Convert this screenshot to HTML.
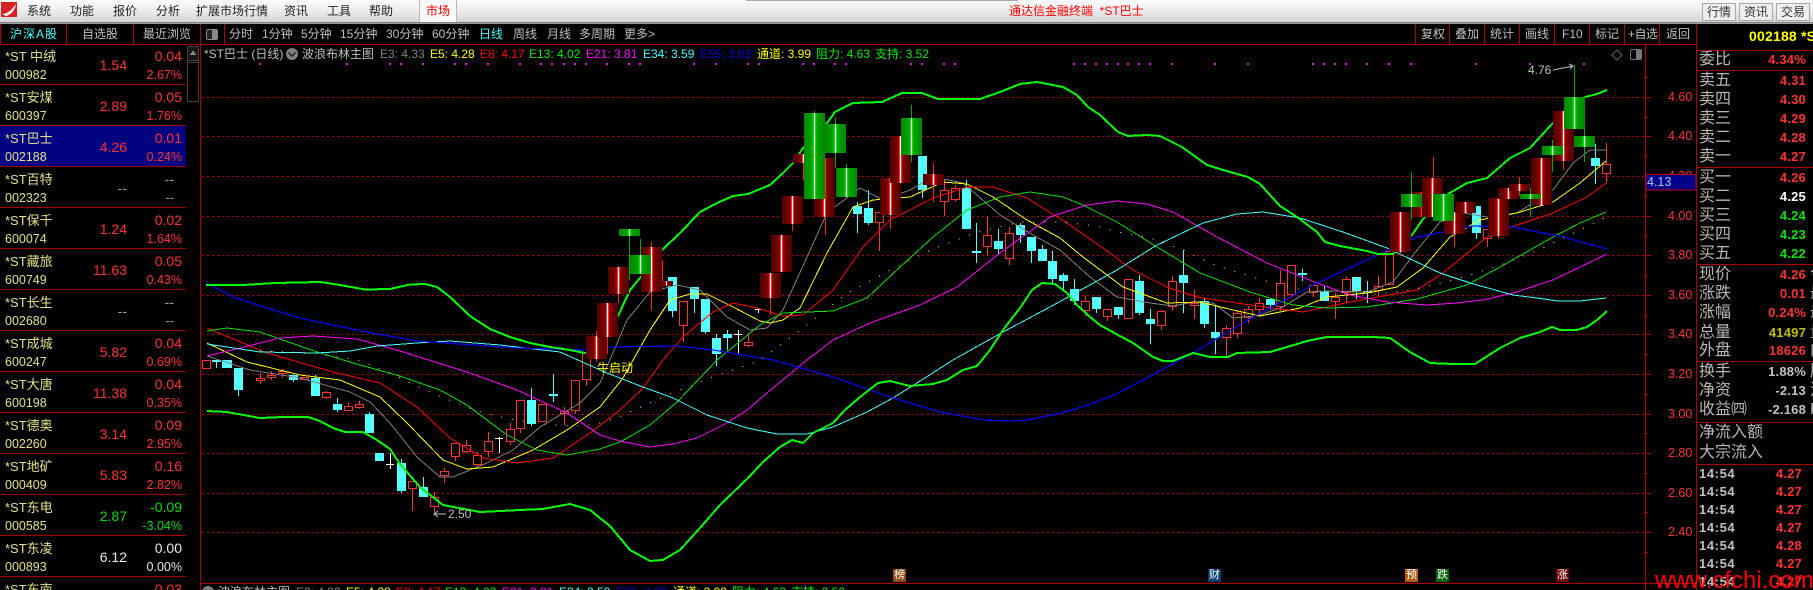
<!DOCTYPE html>
<html><head><meta charset="utf-8"><style>
html,body{margin:0;padding:0;background:#000;width:1813px;height:590px;overflow:hidden}
body{position:relative;font-family:"Liberation Sans","Noto Sans CJK SC",sans-serif;color:#c0c0c0}
.t{position:absolute;white-space:nowrap;line-height:16px;font-size:12px}
.top{position:absolute;left:0;top:0;width:1813px;height:22px;background:linear-gradient(#fbfbfb,#f0f0f0 40%,#d4d4d4)}
.sh{position:absolute;left:0;top:22px;width:1813px;height:2px;background:linear-gradient(#707070,#b0b0b0)}
.m{color:#222;top:3px}
.btn{position:absolute;top:3px;width:32px;height:16px;border:1px solid #a8a8a8;background:#eee;color:#333;font-size:12px;line-height:16px;text-align:center}
.r{position:absolute;left:0;width:186px;height:40px;border-bottom:1px solid #a80000;color:#ff3232}
.r span{position:absolute;white-space:nowrap;line-height:16px}
.n{left:5px;top:5px;font-size:13px;color:#e2e28a}
.c{left:5px;top:22.5px;font-size:12.5px;color:#e2e28a}
.p{right:59px;top:13px;font-size:14px}
.d{right:4px;top:4px;font-size:14px}
.q{right:4px;top:23px;font-size:12.5px}
.g{color:#00dd00}.w{color:#e8e8e8}.x{color:#a0a0a0}
.l{left:1699px;font-size:16px;color:#b8b8b8;line-height:18px}
.v{right:7px;font-size:13px;font-weight:bold;color:#ff3232;letter-spacing:.2px}
.lab{left:1668px;font-size:12.5px;color:#ff3232}
.tm{left:1699px;font-size:13px;font-weight:bold;letter-spacing:.6px;color:#c0c0c0}
.tp{right:11px;font-size:13px;font-weight:bold;color:#ff3232;letter-spacing:.2px}
.e{position:absolute;top:569px;width:13px;height:13px;color:#fff;font-size:11px;line-height:13px;text-align:center;overflow:hidden}
</style></head><body>

<span class="t lab" style="top:168px">4.20</span>

<svg width="1813" height="590" style="position:absolute;left:0;top:0" xmlns="http://www.w3.org/2000/svg">
<defs>
<linearGradient id="br"><stop offset="0" stop-color="#500000"/><stop offset=".3" stop-color="#700000"/><stop offset=".42" stop-color="#a00000"/><stop offset=".46" stop-color="#ff0000"/><stop offset=".47" stop-color="#fff"/><stop offset=".53" stop-color="#fff"/><stop offset=".54" stop-color="#ff0000"/><stop offset=".58" stop-color="#a00000"/><stop offset=".7" stop-color="#700000"/><stop offset="1" stop-color="#500000"/></linearGradient>
<linearGradient id="bg"><stop offset="0" stop-color="#008800"/><stop offset=".35" stop-color="#00a000"/><stop offset=".45" stop-color="#00c800"/><stop offset=".47" stop-color="#40ff40"/><stop offset=".48" stop-color="#fff"/><stop offset=".52" stop-color="#fff"/><stop offset=".53" stop-color="#40ff40"/><stop offset=".55" stop-color="#00c800"/><stop offset=".65" stop-color="#00a000"/><stop offset="1" stop-color="#008800"/></linearGradient>
</defs>
<!-- grid -->
<path shape-rendering="crispEdges" stroke="#b00000" stroke-width="1" stroke-dasharray="2 3" fill="none" d="M202 97.5H1645M202 136.5H1645M202 176.5H1645M202 216.5H1645M202 255.5H1645M202 295.5H1645M202 334.5H1645M202 374.5H1645M202 414.5H1645M202 453.5H1645M202 493.5H1645M202 532.5H1645"/>
<!-- frame lines -->
<path shape-rendering="crispEdges" stroke="#b00000" stroke-width="1" fill="none" d="M200.5 24V590M0 44.5H1696M66.5 24V44M133.5 24V44M0.5 24V44M224.5 24V44M1415.5 24V44M1449.5 24V44M1484.5 24V44M1519.5 24V44M1554.5 24V44M1589.5 24V44M1624.5 24V44M1659.5 24V44M1696.5 24V590M1645.5 44V590M200 583.5H1696M1696 50.5H1813M1696 70.5H1813M1696 167.5H1813M1696 264.5H1813M1696 361.5H1813M1696 422.5H1813M1696 464.5H1813
M1645 97.5h6M1645 136.5h6M1645 176.5h6M1645 216.5h6M1645 255.5h6M1645 295.5h6M1645 334.5h6M1645 374.5h6M1645 414.5h6M1645 453.5h6M1645 493.5h6M1645 532.5h6M1645 77.5h3M1645 117.5h3M1645 156.5h3M1645 196.5h3M1645 236.5h3M1645 275.5h3M1645 315.5h3M1645 354.5h3M1645 394.5h3M1645 433.5h3M1645 473.5h3M1645 512.5h3M1645 552.5h3"/>
<!-- magenta dots -->
<path shape-rendering="crispEdges" stroke="#ff00ff" stroke-width="2" fill="none" d="M259 64h2M346 64h2M389 64h2M400 64h2M422 64h2M454 64h2M465 64h2M487 64h2M519 64h2M540 64h2M551 64h2M563 64h2M574 64h2M585 64h2M606 64h2M628 64h2M639 64h2M693 64h2M715 64h2M747 64h2M758 64h2M802 64h2M813 64h2M834 64h2M845 64h2M910 64h2M921 64h2M943 64h2M954 64h2M1073 64h2M1084 64h2M1095 64h2M1106 64h2M1117 64h2M1127 64h2M1138 64h2M1149 64h2M1171 64h2M1214 64h2M1247 64h2M1312 64h2M1323 64h2M1334 64h2M1345 64h2M1366 64h2M1388 64h2M1410 64h2M1475 64h2M1529 64h2M1583 64h2"/>
<!-- small candles: hollow red -->
<path shape-rendering="crispEdges" stroke="#ff3232" stroke-width="1" fill="none" d="M202.5 360.5h8v8h-8z
M256.5 378.5h8v2h-8zM260.5 373V378M260.5 381V384
M267.5 375.5h8v2h-8zM271.5 371V375M271.5 378V380
M278.5 371.5h8v2h-8zM282.5 369V371M282.5 374V378
M300.5 377.5h8v2h-8z
M322.5 392.5h8v5h-8zM326.5 391V392M326.5 398V399
M344.5 406.5h8v4h-8zM348.5 403V406
M355.5 404.5h8v3h-8zM359.5 401V404M359.5 408V409
M408.5 481.5h8v7h-8zM412.5 489V511
M430.5 497.5h8v9h-8zM434.5 492V497M434.5 507V513
M440.5 471.5h8v4h-8zM444.5 468V471M444.5 476V483
M451.5 443.5h8v13h-8zM455.5 457V461
M462.5 445.5h8v6h-8zM466.5 440V445M466.5 452V453
M473.5 455.5h8v9h-8zM477.5 452V455M477.5 465V466
M484.5 441.5h8v10h-8zM488.5 432V441M488.5 452V457
M506.5 429.5h8v12h-8zM510.5 423V429M510.5 442V445
M516.5 400.5h8v28h-8zM520.5 429V433
M538.5 404.5h8v17h-8z
M560.5 411.5h8v2h-8zM564.5 407V411M564.5 414V425
M571.5 380.5h8v30h-8zM575.5 411V414
M582.5 353.5h8v26h-8zM586.5 380V386
M679.5 301.5h8v24h-8zM683.5 326V342
M744.5 342.5h8v3h-8zM748.5 333V342M748.5 346V347
M875.5 212.5h8v10h-8zM879.5 223V251
M940.5 190.5h8v11h-8zM944.5 179V190M944.5 202V216
M951.5 188.5h8v11h-8zM955.5 185V188M955.5 200V202
M983.5 235.5h8v11h-8zM987.5 217V235M987.5 247V255
M1005.5 233.5h8v25h-8zM1009.5 227V233M1009.5 259V265
M1081.5 301.5h8v9h-8zM1085.5 296V301M1085.5 311V316
M1103.5 309.5h8v7h-8zM1107.5 317V321
M1124.5 279.5h8v39h-8z
M1157.5 311.5h8v14h-8zM1161.5 310V311M1161.5 326V330
M1168.5 281.5h8v25h-8zM1172.5 276V281M1172.5 307V311
M1190.5 303.5h8v2h-8zM1194.5 290V303M1194.5 306V319
M1222.5 328.5h8v9h-8zM1226.5 325V328M1226.5 338V356
M1233.5 313.5h8v20h-8zM1237.5 310V313M1237.5 334V338
M1244.5 309.5h8v8h-8zM1248.5 306V309M1248.5 318V323
M1255.5 303.5h8v6h-8zM1259.5 298V303M1259.5 310V317
M1276.5 283.5h8v23h-8zM1280.5 270V283M1280.5 307V311
M1287.5 265.5h8v29h-8zM1291.5 295V298
M1309.5 285.5h8v7h-8zM1313.5 293V297
M1331.5 297.5h8v4h-8zM1335.5 293V297M1335.5 302V319
M1342.5 279.5h8v13h-8zM1346.5 276V279M1346.5 293V302
M1374.5 286.5h8v4h-8zM1378.5 276V286M1378.5 291V296
M1385.5 251.5h8v33h-8z
M1483.5 229.5h8v9h-8zM1487.5 239V247
M1602.5 164.5h8v9h-8zM1606.5 143V164M1606.5 174V183"/>
<!-- small candles: cyan wicks -->
<path shape-rendering="crispEdges" stroke="#55ffff" stroke-width="1" fill="none" d="M216.5 362V368M238.5 390V396M293.5 380V382M315.5 375V378M337.5 398V412M369.5 412V414M401.5 459V493M423.5 477V487M531.5 388V426M553.5 374V402M672.5 311V317M694.5 299V313M705.5 332V334M716.5 334V366M727.5 330V350M857.5 202V233M868.5 190V225M922.5 190V198M966.5 180V188M976.5 223V263M998.5 229V254M1020.5 223V243M1031.5 251V263M1042.5 245V249M1052.5 251V283M1063.5 273V290M1074.5 279V305M1096.5 309V313M1118.5 315V319M1139.5 275V315M1150.5 309V344M1183.5 250V313M1204.5 298V328M1215.5 305V354M1270.5 305V309M1302.5 269V281M1324.5 286V291M1356.5 291V299M1367.5 281V303M1476.5 233V239M1595.5 144V184"/>
<path shape-rendering="crispEdges" fill="#55ffff" d="M212 360h9v2h-9zM222 360h10v8h-10zM234 368h9v22h-9zM289 375h9v5h-9zM311 378h9v18h-9zM333 404h9v6h-9zM365 414h9v19h-9zM375 453h9v8h-9zM397 463h9v28h-9zM419 487h9v10h-9zM527 400h9v24h-9zM549 394h9v2h-9zM668 277h9v34h-9zM690 287h9v12h-9zM701 299h9v33h-9zM712 338h9v16h-9zM723 334h9v4h-9zM853 206h9v8h-9zM864 208h9v15h-9zM918 156h9v34h-9zM962 188h9v41h-9zM972 251h9v2h-9zM994 241h9v8h-9zM1016 225h9v10h-9zM1027 237h9v14h-9zM1038 249h9v12h-9zM1048 261h9v18h-9zM1059 275h9v6h-9zM1070 289h9v12h-9zM1092 297h9v12h-9zM1114 307h9v8h-9zM1135 281h9v32h-9zM1146 319h9v5h-9zM1179 275h9v8h-9zM1200 301h9v23h-9zM1211 332h9v6h-9zM1266 299h9v6h-9zM1298 273h9v2h-9zM1320 291h9v10h-9zM1352 277h9v14h-9zM1363 291h9v2h-9zM1472 206h9v27h-9zM1591 158h9v8h-9z"/>
<!-- white crosses -->
<path shape-rendering="crispEdges" stroke="#fff" stroke-width="1" fill="none" d="M390.5 453V469M386 464.5H394M499.5 437V453M495 438.5H503M738.5 330V353M734 334.5H742M758.5 309V313M755 309.5H761"/>
<!-- lines -->
<g fill="none" shape-rendering="crispEdges" stroke-width="1">
<polyline stroke="#808080" points="207,356 250,370 300,378 350,392 370,402 390,423 417,457 440,477 453,477 487,463 513,450 540,427 580,403 600,383 627,320 650,292 677,285 700,290 727,317 750,330 767,328 783,310 807,257 827,213 860,188 883,200 910,190 933,177 963,183 1000,215 1033,235 1060,250 1090,277 1117,297 1150,303 1173,306 1193,302 1213,303 1233,318 1257,316 1283,307 1307,292 1330,291 1367,292 1393,282 1417,250 1440,222 1463,213 1487,217 1517,213 1553,190 1573,163 1590,150 1606,150"/>
<polyline stroke="#ffff00" points="207,343 247,362 300,375 340,380 380,397 407,423 443,460 467,469 493,467 533,450 567,430 600,407 623,378 650,330 670,300 690,294 707,294 733,307 760,321 770,323 783,320 800,308 827,253 853,207 873,200 910,197 943,182 967,184 993,197 1027,220 1060,238 1083,257 1123,287 1167,303 1200,302 1233,310 1260,316 1300,308 1327,297 1367,293 1397,287 1423,268 1450,237 1480,220 1517,213 1553,202 1580,183 1606,161"/>
<polyline stroke="#ff0000" points="207,328 267,353 333,372 380,383 417,407 450,438 483,458 517,463 553,458 590,433 620,410 643,388 663,360 683,337 713,312 733,303 757,308 783,316 803,315 833,290 863,247 890,220 933,198 967,187 993,187 1027,198 1067,223 1103,248 1133,270 1167,287 1197,297 1250,305 1303,312 1350,302 1383,296 1417,290 1443,273 1487,237 1517,225 1553,213 1587,197 1606,183"/>
<polyline stroke="#00e000" points="207,331 227,328 260,332 317,352 360,365 400,376 440,390 467,405 507,435 537,450 567,455 600,449 620,442 650,425 677,402 699,379 717,360 760,325 783,313 833,311 867,298 900,267 933,237 967,210 1000,197 1030,192 1063,197 1083,205 1117,222 1157,247 1200,273 1250,292 1293,305 1327,308 1367,307 1417,299 1467,285 1500,267 1553,237 1580,223 1606,212"/>
<polyline stroke="#ff00ff" points="207,356 240,348 280,338 313,336 357,339 400,351 467,372 517,390 567,413 600,435 620,441 650,447 673,444 697,438 727,423 747,410 773,388 807,360 833,340 870,323 920,305 957,287 1000,253 1050,217 1087,205 1117,201 1147,204 1173,212 1217,237 1267,263 1317,283 1350,295 1387,302 1427,305 1457,303 1483,300 1513,293 1553,280 1607,254"/>
<polyline stroke="#40ffff" points="207,344 260,352 317,353 350,351 377,346 417,343 450,341 500,345 560,352 607,373 643,387 673,398 707,415 747,428 777,434 807,434 833,427 867,412 893,398 917,383 953,360 1003,332 1050,307 1117,270 1157,245 1203,223 1237,214 1263,212 1300,218 1343,232 1387,248 1440,273 1470,283 1513,295 1537,298 1558,301 1580,301 1606,298"/>
<polyline stroke="#0000ff" stroke-width="1.2" points="207,283 233,297 267,308 300,318 333,325 377,334 417,341 517,348 587,350 608,347 677,346 713,350 773,360 833,377 893,398 940,412 983,420 1010,421 1027,420 1062,413 1085,406 1112,396 1143,380 1193,353 1253,317 1317,283 1388,250 1417,237 1443,232 1473,226 1513,227 1563,237 1607,249"/>
<polyline stroke="#00ff00" stroke-width="2" points="206,285 243,285 275,283 320,282 340,285 365,289.5 390,289 410,284.5 425,284 437,287 450,297 470,316 490,329 510,337 530,343 550,347 570,350 585,353 600,351 618,316 630,290 640,278 662,250 680,233 700,212 717,203 733,196 748,194 770,185 783,173 793,163 803,148 827,123 835,112 853,103 882,102 902,93 922,93 938,99 980,99 1000,92 1020,84 1037,82 1063,87 1077,95 1088,107 1100,115 1118,132 1128,136 1147,135 1160,136 1182,147 1207,165 1223,170 1248,177 1260,184 1280,206 1297,217 1317,232 1325,242 1340,246 1367,251 1378,254 1393,254 1412,235 1423,219 1448,194 1467,183 1487,178 1510,158 1530,148 1552,124 1585,97 1597,94 1607,90"/>
<polyline stroke="#00ff00" stroke-width="2" points="207,411 227,412 260,418 283,417 308,417 320,421 333,428 345,432 363,432 377,440 390,449 400,464 420,487 443,505 480,512 520,510 543,509 570,504 590,510 610,526 630,550 650,561 663,560 680,550 700,528 720,505 747,479 763,462 780,447 792,440 803,443 813,433 833,423 845,410 860,397 878,383 890,381 910,386 933,384 947,380 963,370 977,366 990,350 1003,330 1020,308 1032,290 1042,283 1055,284 1067,293 1077,305 1090,317 1100,325 1118,335 1133,343 1153,357 1163,361 1173,361 1193,353 1210,357 1228,357 1237,353 1270,352 1287,347 1307,341 1327,337 1373,337 1390,338 1410,352 1430,363 1453,364 1475,364 1500,348 1520,338 1540,332 1552,327 1560,330 1577,330 1587,327 1597,320 1607,311"/>
</g>
<!-- yellow channel dots -->
<polyline fill="none" stroke="#ffff00" stroke-width="1" stroke-dasharray="1 10" points="260,351 314,353 358,360 390,373 434,394 477,411 510,419 542,424 575,426 597,424 619,417 652,402 672,393 693,385 715,376 759,361 803,328 846,294 890,270 933,249 977,232 1021,222 1063,222 1096,226 1118,232 1150,238 1183,250 1215,265 1259,279 1302,290 1346,292 1378,294 1411,290 1454,280 1498,266 1541,249 1606,217"/>
<!-- big candles -->
<path shape-rendering="crispEdges" stroke="#ff2020" stroke-width="1" fill="none" d="M596.5 331V362M607.5 337V354M618.5 294V303M651.5 242V311M662.5 260V287M770.5 298V315M792.5 224V231M803.5 163V180M825.5 217V235M890.5 215V229M933.5 163V202M1400.5 252V256M1433.5 157V178M1454.5 234V247M1498.5 236V239M1519.5 177V196M1563.5 161V170"/>
<g fill="url(#br)" shape-rendering="crispEdges">
<rect x="586" y="336" width="21" height="23"/><rect x="597" y="303" width="21" height="34"/><rect x="608" y="267" width="21" height="27"/><rect x="641" y="247" width="21" height="45"/><rect x="660" y="281" width="13" height="5"/>
<rect x="760" y="273" width="21" height="25"/><rect x="771" y="235" width="21" height="37"/><rect x="782" y="196" width="21" height="28"/><rect x="793" y="154" width="21" height="9"/><rect x="814" y="158" width="21" height="59"/>
<rect x="880" y="178" width="21" height="37"/><rect x="890" y="136" width="21" height="47"/><rect x="923" y="174" width="21" height="11"/>
<rect x="1390" y="212" width="21" height="40"/><rect x="1412" y="192" width="21" height="25"/><rect x="1422" y="178" width="21" height="39"/><rect x="1444" y="212" width="21" height="22"/><rect x="1455" y="202" width="21" height="11"/><rect x="1488" y="198" width="21" height="38"/><rect x="1498" y="188" width="21" height="11"/><rect x="1509" y="184" width="21" height="7"/><rect x="1531" y="158" width="21" height="47"/><rect x="1553" y="111" width="21" height="50"/>
</g>
<path shape-rendering="crispEdges" stroke="#00a800" stroke-width="1" fill="none" d="M629.5 236V280M640.5 239V255M814.5 111V113M835.5 117V168M846.5 164V168M911.5 105V162M1411.5 172V220M1530.5 188V217M1552.5 140V172M1574.5 65V97M1584.5 129V162"/>
<g fill="url(#bg)" shape-rendering="crispEdges">
<rect x="619" y="229" width="21" height="7"/><rect x="630" y="255" width="21" height="19"/><rect x="804" y="113" width="21" height="86"/><rect x="825" y="124" width="21" height="29"/><rect x="836" y="168" width="21" height="29"/><rect x="901" y="118" width="21" height="37"/><rect x="1401" y="194" width="21" height="13"/><rect x="1433" y="194" width="21" height="27"/><rect x="1520" y="194" width="21" height="5"/><rect x="1542" y="146" width="21" height="9"/><rect x="1564" y="97" width="21" height="32"/><rect x="1574" y="136" width="21" height="11"/>
</g>
<!-- arrows -->
<path fill="none" stroke="#c0c0c0" stroke-width="1" d="M1553 70L1573 66M1569 64L1573 66L1570 69M434 514H446M438 511L434 514L438 517"/>
<!-- blue price box -->
<rect x="1646" y="174.5" width="50" height="15.5" fill="#000088" stroke="#c00000" stroke-width="1" shape-rendering="crispEdges"/>
<!-- legend circles -->
<circle cx="292" cy="54" r="6" fill="#808080"/><path d="M288.5 52.5L292 56L295.5 52.5" fill="none" stroke="#222" stroke-width="1.5"/>
<circle cx="208" cy="592" r="6" fill="#808080"/>
<!-- chart icons -->
<path d="M1617 50L1622 55L1617 60L1612 55Z" fill="none" stroke="#666" stroke-width="1"/>
<rect x="1630.5" y="49.5" width="11" height="10" rx="1.5" fill="none" stroke="#777"/><rect x="1636" y="50" width="5" height="9" fill="#777"/>
<rect x="206.5" y="29.5" width="11" height="10" rx="1.5" fill="#222" stroke="#888"/><rect x="212" y="30" width="5" height="9" fill="#888"/>
<!-- scrollbar -->
<rect x="187.5" y="46.5" width="11" height="14" fill="#161616" stroke="#444" shape-rendering="crispEdges"/><path d="M193 50.5L196.5 55H189.5Z" fill="#888"/>
<rect x="187.5" y="62.5" width="11" height="39" fill="#000" stroke="#444" shape-rendering="crispEdges"/>
</svg>

<!-- top bar -->
<div class="top"></div><div class="sh"></div>
<div style="position:absolute;left:746px;top:0;width:272px;height:1px;background:#a8a8a8"></div>
<svg width="18" height="18" style="position:absolute;left:0;top:1px"><rect x="1" y="1" width="16" height="15" fill="#d82020"/><path d="M2 13C7 13 11 10 16 3C15 9 11 14 6 15Z" fill="#fff"/></svg>
<div style="position:absolute;left:419px;top:0;width:38px;height:22px;background:#f8f8f8;border-left:1px solid #bbb;border-right:1px solid #bbb;box-sizing:border-box"></div>
<span class="t m" style="left:27px">系统</span><span class="t m" style="left:70px">功能</span><span class="t m" style="left:113px">报价</span><span class="t m" style="left:156px">分析</span><span class="t m" style="left:196px">扩展市场行情</span><span class="t m" style="left:284px">资讯</span><span class="t m" style="left:327px">工具</span><span class="t m" style="left:369px">帮助</span><span class="t m" style="left:426px;color:#f00">市场</span>
<span class="t" style="left:1009px;top:3px;color:#f00">通达信金融终端 &nbsp;*ST巴士</span>
<div class="btn" style="left:1702px">行情</div><div class="btn" style="left:1739px">资讯</div><div class="btn" style="left:1776px">交易</div>

<!-- toolbar -->
<span class="t" style="left:10px;top:26px;color:#40ffff;letter-spacing:1px">沪深A股</span><span class="t" style="left:82px;top:26px">自选股</span><span class="t" style="left:143px;top:26px">最近浏览</span>
<span class="t" style="left:229px;top:26px">分时</span><span class="t" style="left:262px;top:26px">1分钟</span><span class="t" style="left:301px;top:26px">5分钟</span><span class="t" style="left:340px;top:26px">15分钟</span><span class="t" style="left:386px;top:26px">30分钟</span><span class="t" style="left:432px;top:26px">60分钟</span><span class="t" style="left:479px;top:26px;color:#40ffff">日线</span><span class="t" style="left:513px;top:26px">周线</span><span class="t" style="left:547px;top:26px">月线</span><span class="t" style="left:579px;top:26px">多周期</span><span class="t" style="left:624px;top:26px">更多&gt;</span>
<span class="t" style="left:1421px;top:26px">复权</span><span class="t" style="left:1455px;top:26px">叠加</span><span class="t" style="left:1490px;top:26px">统计</span><span class="t" style="left:1525px;top:26px">画线</span><span class="t" style="left:1562px;top:26px">F10</span><span class="t" style="left:1595px;top:26px">标记</span><span class="t" style="left:1628px;top:26px;letter-spacing:-.5px">+自选</span><span class="t" style="left:1666px;top:26px">返回</span>

<!-- legend -->
<span class="t" style="left:204px;top:46px">*ST巴士 (日线)</span><span class="t" style="left:302px;top:46px">波浪布林主图</span>
<span class="t" style="left:380px;top:46px;color:#808080">E3: 4.33</span><span class="t" style="left:430px;top:46px;color:#ff0">E5: 4.28</span><span class="t" style="left:480px;top:46px;color:#f00">E8: 4.17</span><span class="t" style="left:529px;top:46px;color:#0e0">E13: 4.02</span><span class="t" style="left:586px;top:46px;color:#f0f">E21: 3.81</span><span class="t" style="left:643px;top:46px;color:#40ffff">E34: 3.59</span><span class="t" style="left:700px;top:46px;color:#0000e0">E55: 3.83</span><span class="t" style="left:757px;top:46px;color:#ff0">通道: 3.99</span><span class="t" style="left:816px;top:46px;color:#0e0">阻力: 4.63</span><span class="t" style="left:875px;top:46px;color:#0e0">支持: 3.52</span>
<span class="t" style="left:218px;top:584px">波浪布林主图</span>
<span class="t" style="left:296px;top:584px;color:#808080">E3: 4.33</span><span class="t" style="left:346px;top:584px;color:#ff0">E5: 4.28</span><span class="t" style="left:396px;top:584px;color:#f00">E8: 4.17</span><span class="t" style="left:445px;top:584px;color:#0e0">E13: 4.02</span><span class="t" style="left:502px;top:584px;color:#f0f">E21: 3.81</span><span class="t" style="left:559px;top:584px;color:#40ffff">E34: 3.59</span><span class="t" style="left:616px;top:584px;color:#0000e0">E55: 3.83</span><span class="t" style="left:673px;top:584px;color:#ff0">通道: 3.99</span><span class="t" style="left:732px;top:584px;color:#0e0">阻力: 4.63</span><span class="t" style="left:791px;top:584px;color:#0e0">支持: 3.52</span>

<!-- annotations -->
<span class="t" style="left:597px;top:360px;color:#ff0">牛启动</span><span class="t" style="left:448px;top:506px;color:#c0c0c0">2.50</span><span class="t" style="left:1528px;top:62px;color:#c0c0c0">4.76</span>

<!-- event icons -->
<div class="e" style="left:893px;background:#8a4a10">榜</div><div class="e" style="left:1208px;background:#0a3d6b">财</div><div class="e" style="left:1405px;background:#b05a14">预</div><div class="e" style="left:1436px;background:#006400">跌</div><div class="e" style="left:1556px;background:#700000">涨</div>

<!-- stock list -->
<div class="r" style="top:44px"><span class="n">*ST 中绒</span><span class="c">000982</span><span class="p">1.54</span><span class="d">0.04</span><span class="q">2.67%</span></div>
<div class="r" style="top:85px"><span class="n">*ST安煤</span><span class="c">600397</span><span class="p">2.89</span><span class="d">0.05</span><span class="q">1.76%</span></div>
<div class="r" style="top:126px;background:#000080"><span class="n">*ST巴士</span><span class="c">002188</span><span class="p">4.26</span><span class="d">0.01</span><span class="q">0.24%</span></div>
<div class="r" style="top:167px"><span class="n">*ST百特</span><span class="c">002323</span><span class="p x">--</span><span class="d x" style="right:12px">--</span><span class="q x" style="right:12px">--</span></div>
<div class="r" style="top:208px"><span class="n">*ST保千</span><span class="c">600074</span><span class="p">1.24</span><span class="d">0.02</span><span class="q">1.64%</span></div>
<div class="r" style="top:249px"><span class="n">*ST藏旅</span><span class="c">600749</span><span class="p">11.63</span><span class="d">0.05</span><span class="q">0.43%</span></div>
<div class="r" style="top:290px"><span class="n">*ST长生</span><span class="c">002680</span><span class="p x">--</span><span class="d x" style="right:12px">--</span><span class="q x" style="right:12px">--</span></div>
<div class="r" style="top:331px"><span class="n">*ST成城</span><span class="c">600247</span><span class="p">5.82</span><span class="d">0.04</span><span class="q">0.69%</span></div>
<div class="r" style="top:372px"><span class="n">*ST大唐</span><span class="c">600198</span><span class="p">11.38</span><span class="d">0.04</span><span class="q">0.35%</span></div>
<div class="r" style="top:413px"><span class="n">*ST德奥</span><span class="c">002260</span><span class="p">3.14</span><span class="d">0.09</span><span class="q">2.95%</span></div>
<div class="r" style="top:454px"><span class="n">*ST地矿</span><span class="c">000409</span><span class="p">5.83</span><span class="d">0.16</span><span class="q">2.82%</span></div>
<div class="r" style="top:495px"><span class="n">*ST东电</span><span class="c">000585</span><span class="p g">2.87</span><span class="d g">-0.09</span><span class="q g">-3.04%</span></div>
<div class="r" style="top:536px"><span class="n">*ST东凌</span><span class="c">000893</span><span class="p w">6.12</span><span class="d w">0.00</span><span class="q w">0.00%</span></div>
<div class="r" style="top:577px;border:0;height:13px;overflow:hidden"><span class="n">*ST东南</span><span class="d">0.03</span></div>

<!-- axis labels -->
<span class="t lab" style="top:89px">4.60</span><span class="t lab" style="top:128px">4.40</span><span class="t lab" style="top:208px">4.00</span><span class="t lab" style="top:247px">3.80</span><span class="t lab" style="top:287px">3.60</span><span class="t lab" style="top:326px">3.40</span><span class="t lab" style="top:366px">3.20</span><span class="t lab" style="top:406px">3.00</span><span class="t lab" style="top:445px">2.80</span><span class="t lab" style="top:485px">2.60</span><span class="t lab" style="top:524px">2.40</span>
<span class="t" style="left:1647px;top:174px;color:#a8c8ff;font-size:12.5px">4.13</span>

<!-- right panel -->
<span class="t" style="left:1749px;top:28px;color:#ff0;font-size:14px;font-weight:bold;letter-spacing:.2px">002188 *ST巴士</span>
<span class="t l" style="top:51px">委比</span><span class="t v" style="top:52px">4.34%</span>
<span class="t l" style="top:72px">卖五</span><span class="t v" style="top:73px">4.31</span>
<span class="t l" style="top:91px">卖四</span><span class="t v" style="top:92px">4.30</span>
<span class="t l" style="top:110px">卖三</span><span class="t v" style="top:111px">4.29</span>
<span class="t l" style="top:129px">卖二</span><span class="t v" style="top:130px">4.28</span>
<span class="t l" style="top:148px">卖一</span><span class="t v" style="top:149px">4.27</span>
<span class="t l" style="top:169px">买一</span><span class="t v" style="top:170px">4.26</span>
<span class="t l" style="top:188px">买二</span><span class="t v" style="top:189px;color:#fff">4.25</span>
<span class="t l" style="top:207px">买三</span><span class="t v" style="top:208px;color:#00e600">4.24</span>
<span class="t l" style="top:226px">买四</span><span class="t v" style="top:227px;color:#00e600">4.23</span>
<span class="t l" style="top:245px">买五</span><span class="t v" style="top:246px;color:#00e600">4.22</span>
<span class="t l" style="top:266px">现价</span><span class="t v" style="top:267px">4.26</span>
<span class="t l" style="top:285px">涨跌</span><span class="t v" style="top:286px">0.01</span>
<span class="t l" style="top:304px">涨幅</span><span class="t v" style="top:305px">0.24%</span>
<span class="t l" style="top:324px">总量</span><span class="t v" style="top:325px;color:#c0c000">41497</span>
<span class="t l" style="top:342px">外盘</span><span class="t v" style="top:343px">18626</span>
<span class="t l" style="top:363px">换手</span><span class="t v" style="top:364px;color:#c0c0c0">1.88%</span>
<span class="t l" style="top:382px">净资</span><span class="t v" style="top:383px;color:#c0c0c0">-2.13</span>
<span class="t l" style="top:401px">收益㈣</span><span class="t v" style="top:402px;color:#c0c0c0">-2.168</span>
<span class="t l" style="top:424px">净流入额</span>
<span class="t l" style="top:444px">大宗流入</span>
<span class="t tm" style="top:466px">14:54</span><span class="t tp" style="top:466px">4.27</span>
<span class="t tm" style="top:484px">14:54</span><span class="t tp" style="top:484px">4.27</span>
<span class="t tm" style="top:502px">14:54</span><span class="t tp" style="top:502px">4.27</span>
<span class="t tm" style="top:520px">14:54</span><span class="t tp" style="top:520px">4.27</span>
<span class="t tm" style="top:538px">14:54</span><span class="t tp" style="top:538px">4.28</span>
<span class="t tm" style="top:556px">14:54</span><span class="t tp" style="top:556px">4.27</span>
<span class="t tm" style="top:574px">14:54</span><span class="t tp" style="top:574px">4.27</span>

<!-- cut off right column -->
<span class="t l" style="left:1810px;top:266px">今开</span><span class="t l" style="left:1810px;top:285px">最高</span><span class="t l" style="left:1810px;top:304px">最低</span><span class="t l" style="left:1810px;top:324px">量比</span><span class="t l" style="left:1810px;top:342px">内盘</span><span class="t l" style="left:1810px;top:363px">股本</span><span class="t l" style="left:1810px;top:382px">流通</span><span class="t l" style="left:1810px;top:401px">PE</span>

<!-- watermark -->
<span class="t" style="left:1655px;top:567px;font-size:24px;line-height:28px;color:#f00">www.cfchi.com</span>
</body></html>
